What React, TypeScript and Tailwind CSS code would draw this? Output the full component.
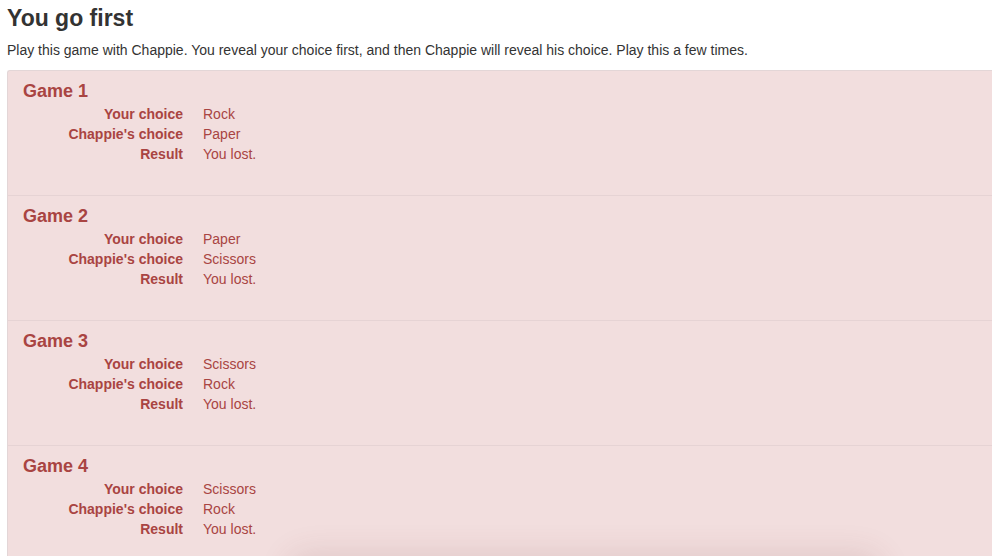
export default function App()
{
    const games = [
        { title: "Game 1", mine: "Rock", his: "Paper", result: "You lost." },
        { title: "Game 2", mine: "Paper", his: "Scissors", result: "You lost." },
        { title: "Game 3", mine: "Scissors", his: "Rock", result: "You lost." },
        { title: "Game 4", mine: "Scissors", his: "Rock", result: "You lost." },
    ];

    return (
        <div className="relative w-[992px] h-[556px] overflow-hidden bg-white font-['Liberation_Sans',Arial,sans-serif] text-[#333]">
            <div className="pl-[7px] pt-[4px]">
                <h1 className="text-[23px] font-bold leading-[28px] text-[#333]">You go first</h1>
                <p className="text-[14px] leading-[20px] mt-[8px] mb-[10px]">Play this game with Chappie. You reveal your choice first, and then Chappie will reveal his choice. Play this a few times.</p>
                <div className="w-[1000px] border-t border-l border-[#e3d6d7] rounded-tl-[3px] bg-[#f2dede] text-[#a94442]">
                    {
                        games.map((g, key) => (
                            <div key={key} className={"px-[15px] pt-[10px] " + (key > 0 ? "h-[125px] border-t border-[#e6d3d4]" : "h-[124px]")}>
                                <h4 className="text-[18px] font-bold leading-[20px] mb-[3px]">{g.title}</h4>
                                <dl className="text-[14px] leading-[20px]">
                                    <div className="flex">
                                        <dt className="w-[160px] text-right font-bold">Your choice</dt>
                                        <dd className="ml-[20px]">{g.mine}</dd>
                                    </div>
                                    <div className="flex">
                                        <dt className="w-[160px] text-right font-bold">Chappie's choice</dt>
                                        <dd className="ml-[20px]">{g.his}</dd>
                                    </div>
                                    <div className="flex">
                                        <dt className="w-[160px] text-right font-bold">Result</dt>
                                        <dd className="ml-[20px]">{g.result}</dd>
                                    </div>
                                </dl>
                            </div>
                        ))
                    }
                </div>
            </div>
            <div className="absolute left-[305px] top-[570px] w-[560px] h-[100px] rounded-[6px] shadow-[0_0_32px_16px_rgba(120,60,60,0.14)]"></div>
        </div>
    );
}
